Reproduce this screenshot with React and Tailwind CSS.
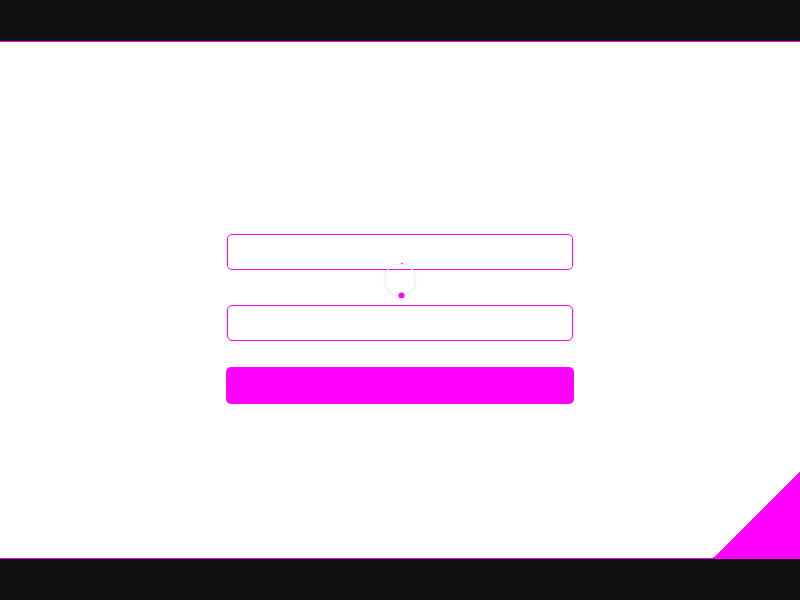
export default function App() {
  return (
    <div className="w-[800px] h-[600px] bg-white flex flex-col overflow-hidden" style={{ fontFamily: 'Inter, sans-serif' }}>
      <header className="h-[41px] bg-[#101010] shrink-0" />
      <div className="h-px bg-[#ff00ff] shrink-0" />
      <main className="relative flex-1 flex flex-col items-center pt-[192px]">
        <form className="relative w-[348px] flex flex-col">
          <input className="mx-px h-[36px] rounded-[5px] border border-[#ff00ff] outline-none bg-white" />
          <input className="mx-px mt-[35px] h-[36px] rounded-[5px] border border-[#ff00ff] outline-none bg-white" />
          <button type="button" className="mt-[26px] h-[37px] rounded-[5px] bg-[#ff00ff]" />
          <svg className="absolute left-[156px] top-[28px]" width="36" height="36" viewBox="0 0 36 36">
            <circle cx="18" cy="18" r="16" fill="none" stroke="#eeeeee" strokeWidth="1.5" />
            <circle cx="20" cy="1.5" r="0.8" fill="#ff00ff" />
            <circle cx="19.5" cy="33.5" r="3" fill="#ff00ff" />
          </svg>
        </form>
        <svg className="absolute right-0 bottom-0" width="87" height="86" viewBox="0 0 87 86" shapeRendering="crispEdges">
          <polygon points="0,86 87,0 87,86" fill="#ff00ff" />
        </svg>
      </main>
      <div className="h-px bg-[#ff00ff] shrink-0" />
      <footer className="h-[41px] bg-[#101010] shrink-0" />
    </div>
  );
}
